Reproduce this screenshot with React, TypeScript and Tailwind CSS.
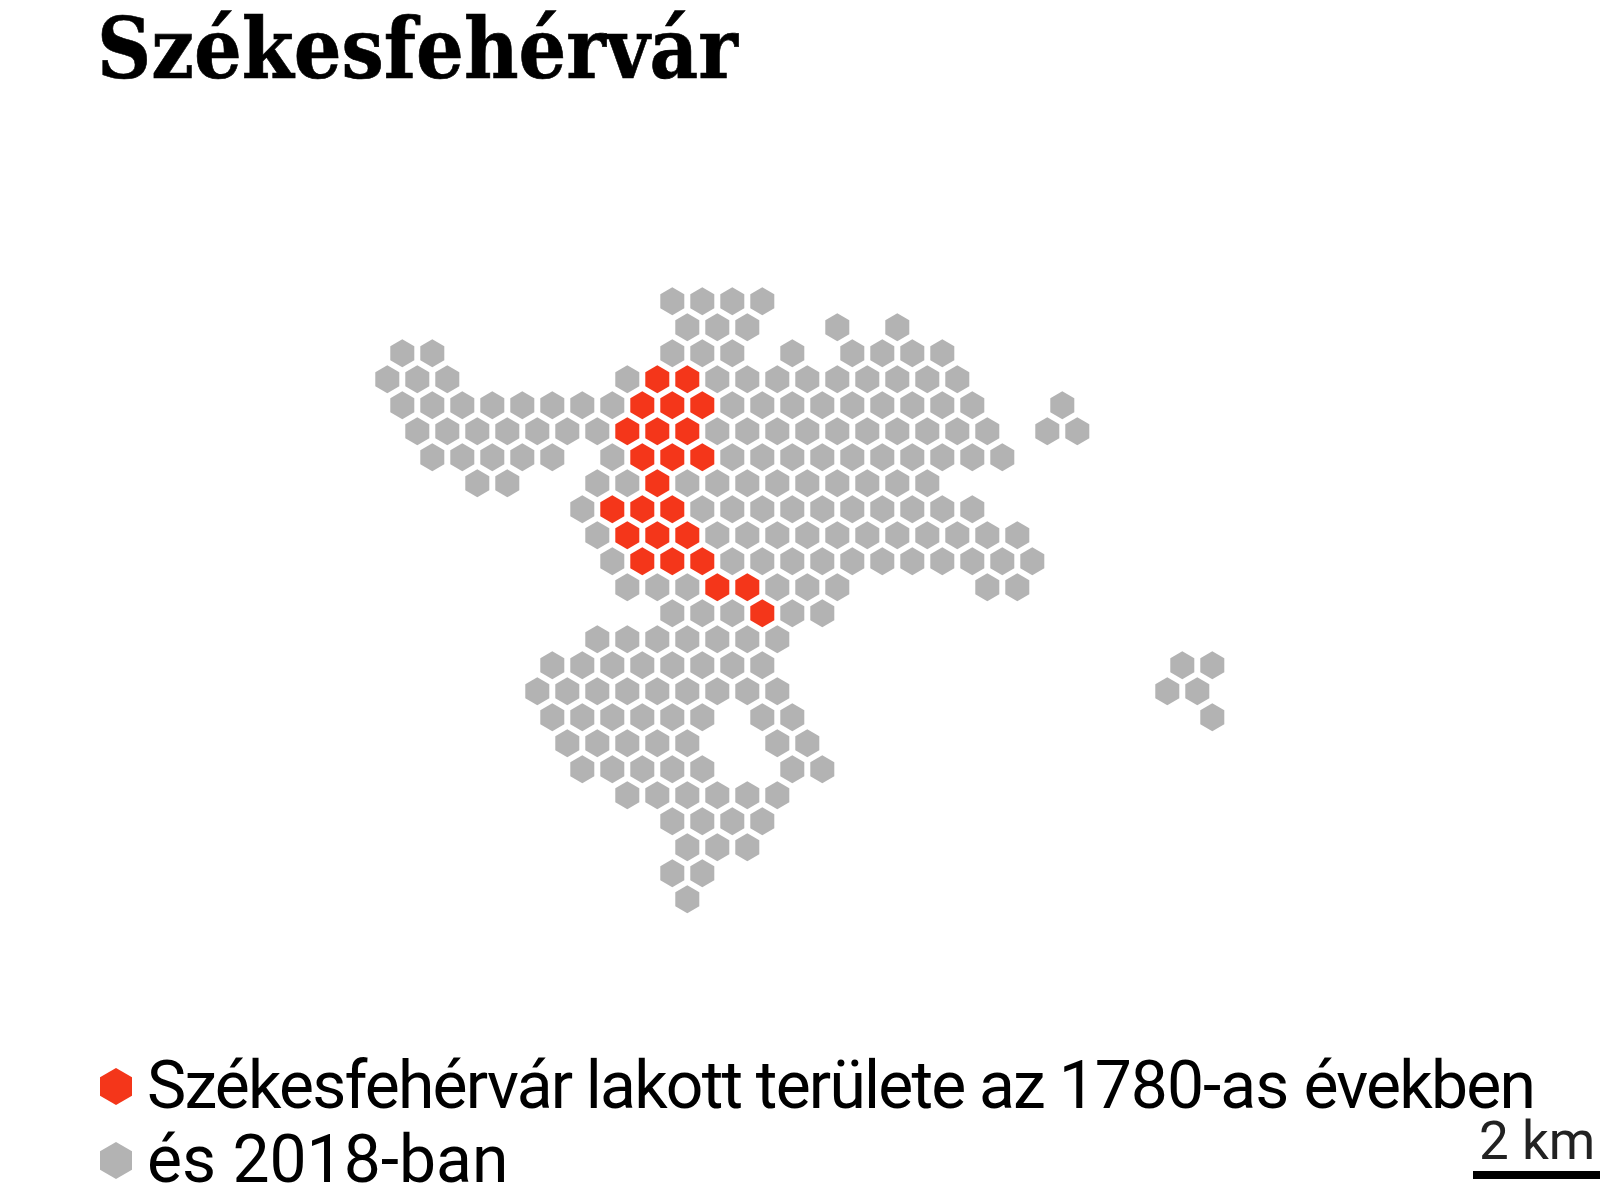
const gray: Record<number, number[]> = {
  0: [0, 2, 4, 6],
  1: [1, 3, 5, 11, 15],
  2: [-18, -16, 0, 2, 4, 8, 12, 14, 16, 18],
  3: [-19, -17, -15, -3, 3, 5, 7, 9, 11, 13, 15, 17, 19],
  4: [-18, -16, -14, -12, -10, -8, -6, -4, 4, 6, 8, 10, 12, 14, 16, 18, 20, 26],
  5: [-17, -15, -13, -11, -9, -7, -5, 3, 5, 7, 9, 11, 13, 15, 17, 19, 21, 25, 27],
  6: [-16, -14, -12, -10, -8, -4, 4, 6, 8, 10, 12, 14, 16, 18, 20, 22],
  7: [-13, -11, -5, -3, 1, 3, 5, 7, 9, 11, 13, 15, 17],
  8: [-6, 2, 4, 6, 8, 10, 12, 14, 16, 18, 20],
  9: [-5, 3, 5, 7, 9, 11, 13, 15, 17, 19, 21, 23],
  10: [-4, 4, 6, 8, 10, 12, 14, 16, 18, 20, 22, 24],
  11: [-3, -1, 1, 7, 9, 11, 21, 23],
  12: [0, 2, 4, 8, 10],
  13: [-5, -3, -1, 1, 3, 5, 7],
  14: [-8, -6, -4, -2, 0, 2, 4, 6, 34, 36],
  15: [-9, -7, -5, -3, -1, 1, 3, 5, 7, 33, 35],
  16: [-8, -6, -4, -2, 0, 2, 6, 8, 36],
  17: [-7, -5, -3, -1, 1, 7, 9],
  18: [-6, -4, -2, 0, 2, 8, 10],
  19: [-3, -1, 1, 3, 5, 7],
  20: [0, 2, 4, 6],
  21: [1, 3, 5],
  22: [0, 2],
  23: [1],
};

const red: Record<number, number[]> = {
  3: [-1, 1],
  4: [-2, 0, 2],
  5: [-3, -1, 1],
  6: [-2, 0, 2],
  7: [-1],
  8: [-4, -2, 0],
  9: [-3, -1, 1],
  10: [-2, 0, 2],
  11: [3, 5],
  12: [6],
};

const hexPoints = (cx: number, cy: number) =>
  `${cx},${cy - 14} ${cx + 12},${cy - 7} ${cx + 12},${cy + 7} ${cx},${cy + 14} ${cx - 12},${cy + 7} ${cx - 12},${cy - 7}`;

const Hexes = ({ rows, className }: { rows: Record<number, number[]>; className: string }) => (
  <g className={className}>
    {Object.entries(rows).flatMap(([row, cols]) =>
      cols.map((col) => <polygon key={`${row}:${col}`} points={hexPoints(672.3 + 15 * col, 201.3 + 26 * Number(row))} />),
    )}
  </g>
);

const LegendHex = ({ className }: { className: string }) => (
  <svg className={`h-[37px] w-[32px] shrink-0 ${className}`} viewBox="0 0 32 37">
    <polygon points="16,0 32,9.25 32,27.75 16,37 0,27.75 0,9.25" />
  </svg>
);

export default function App() {
  return (
    <div className="relative flex h-[1200px] w-[1600px] flex-col overflow-hidden bg-white text-black">
      <h1 className="h-[100px] shrink-0 pl-[97px] font-['DejaVu_Serif_Condensed','DejaVu_Serif',serif] text-[83.5px] leading-[98px] font-bold whitespace-nowrap [-webkit-text-stroke:0.6px_black]">
        Székesfehérvár
      </h1>
      <svg className="block h-[948px] w-full shrink-0" viewBox="0 0 1600 948">
        <Hexes rows={gray} className="fill-[#b3b3b3]" />
        <Hexes rows={red} className="fill-[#f4361a]" />
      </svg>
      <div className="mt-[1px] flex flex-col pl-[100px] font-['Roboto',sans-serif] text-[66px] leading-[74px] whitespace-nowrap">
        <div className="flex items-center gap-[15px]">
          <LegendHex className="fill-[#f4361a]" />
          <span>
            <span className="tracking-[-1.8px]">Székesfehérvár lakott területe az </span>
            <span className="tracking-[-1px]">1780-as </span>
            <span className="tracking-[-1.8px]">években</span>
          </span>
        </div>
        <div className="flex items-center gap-[15px]">
          <LegendHex className="fill-[#b3b3b3]" />
          <span>és 2018-ban</span>
        </div>
      </div>
      <div className="absolute right-0 bottom-[21px] w-[127px] border-b-[8px] border-black pb-[7px] pl-[6px] font-['Roboto',sans-serif] text-[53px] leading-[46px] text-[#222]">
        2 km
      </div>
    </div>
  );
}
